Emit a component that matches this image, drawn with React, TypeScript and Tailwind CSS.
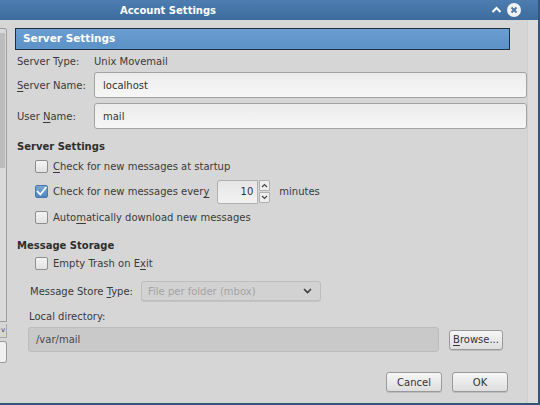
import React from 'react';

const U: React.FC<{ children: React.ReactNode }> = ({ children }) => <span className="underline underline-offset-2">{children}</span>;

const Check: React.FC<{ checked?: boolean }> = ({ checked }) =>
  checked ? (
    <div className="w-[13px] h-[13px] shrink-0 rounded-[2px] border border-[#4a78a8] bg-gradient-to-b from-[#7aa7d6] to-[#4f86c0] flex items-center justify-center">
      <svg width="11" height="11" viewBox="0 0 11 11">
        <path d="M1.5 5.5 L4.3 8.5 L9.8 1.8" fill="none" stroke="#fff" strokeWidth="1.8" strokeLinecap="round" strokeLinejoin="round" />
      </svg>
    </div>
  ) : (
    <div className="w-[13px] h-[13px] shrink-0 rounded-[2px] border border-[#8e8e8e] bg-gradient-to-b from-[#f4f4f4] to-[#e2e2e2]" />
  );

const Btn: React.FC<{ className?: string; children: React.ReactNode }> = ({ className, children }) => (
  <div className={`h-[20px] shrink-0 flex items-center justify-center rounded-[3px] border border-[#9a9a9a] bg-gradient-to-b from-[#f6f6f6] to-[#dedede] shadow-[0_1px_0_#bdbdbd] text-[#333] ${className ?? ''}`}>
    {children}
  </div>
);

export default function App() {
  return (
    <div
      className="w-[540px] h-[405px] overflow-hidden bg-[#d6d6d6] flex flex-col text-[10px] text-[#3a3a3a] border-r-2 border-b-2 border-[#34557a] whitespace-nowrap"
      style={{ fontFamily: '"DejaVu Sans", Verdana, sans-serif' }}
    >
      {/* title bar */}
      <div className="h-[20px] shrink-0 bg-gradient-to-b from-[#4d7db1] to-[#3d6b9d] flex items-center relative">
        <div className="w-[336px] text-center text-white font-bold text-[10px]">Account Settings</div>
        <svg className="absolute left-[491px] top-[6px]" width="11" height="8" viewBox="0 0 11 8">
          <path d="M1.5 6 L5.5 2 L9.5 6" fill="none" stroke="#fff" strokeWidth="2" />
        </svg>
        <div className="absolute left-[507px] top-[3px] w-[14px] h-[14px] rounded-full bg-[#f2f2f2] flex items-center justify-center">
          <svg width="8" height="8" viewBox="0 0 8 8">
            <path d="M1.5 1.5 L6.5 6.5 M6.5 1.5 L1.5 6.5" stroke="#4a76a6" strokeWidth="1.8" />
          </svg>
        </div>
      </div>

      <div className="flex flex-1 min-h-0">
        {/* left pane fragment */}
        <div className="w-[7px] shrink-0 flex flex-col pt-[8px]">
          <div className="h-[294px] border-r border-t border-b border-[#9d9d9d] rounded-tr-[3px] flex flex-col bg-[#dadada]">
            <div className="h-[135px] mt-[4px] mr-[1px] bg-[#bcbcbc]" />
          </div>
          <div className="h-[14px] mt-[2px] border-r border-b border-[#a8a8a8] text-[7px] leading-[12px] text-[#444] pl-[1px]">v</div>
          <div className="h-[22px] mt-[3px] border-r border-t border-b border-[#9a9a9a] rounded-r-[3px] bg-[#f0f0f0]" />
        </div>

        {/* main */}
        <div className="w-[520px] shrink-0 flex flex-col pl-[10px]">
          <div className="mt-[8px] ml-[-2px] mr-[17px] h-[22px] bg-gradient-to-b from-[#6a9dd0] to-[#5d92c7] border border-[#1f2f42] flex items-center pl-[7px] text-white font-bold text-[10.5px]">
            Server Settings
          </div>

          <div className="mt-[3px] h-[16px] flex items-center">
            <span className="w-[77px]">Server Type:</span>
            <span>Unix Movemail</span>
          </div>
          <div className="mt-[3px] h-[26px] flex items-center">
            <span className="w-[77px]"><U>S</U>erver Name:</span>
            <div className="flex-1 h-full rounded-[3px] border border-[#a3a3a3] bg-gradient-to-b from-[#ececec] to-[#f6f6f6] flex items-center pl-[8px] text-[#333]">localhost</div>
          </div>
          <div className="mt-[5px] h-[26px] flex items-center">
            <span className="w-[77px]">User <U>N</U>ame:</span>
            <div className="flex-1 h-full rounded-[3px] border border-[#a3a3a3] bg-gradient-to-b from-[#ececec] to-[#f6f6f6] flex items-center pl-[8px] text-[#333]">mail</div>
          </div>

          <div className="mt-[9px] h-[16px] flex items-center font-bold text-[#2e2e2e]">Server Settings</div>

          <div className="h-[25px] flex items-center gap-[5px] pl-[18px]">
            <Check />
            <span><U>C</U>heck for new messages at startup</span>
          </div>
          <div className="h-[25px] flex items-center pl-[18px]">
            <Check checked />
            <span className="ml-[5px]">Check for new messages ever<U>y</U></span>
            <div className="ml-[8px] w-[41px] h-[24px] rounded-l-[3px] border border-[#b0b0b0] bg-gradient-to-b from-[#e6e6e6] to-[#f2f2f2] flex items-center justify-end pr-[4px] text-[#333]">10</div>
            <div className="flex flex-col ml-[1px] gap-[1px]">
              <div className="w-[11px] h-[11px] border border-[#b0b0b0] rounded-tr-[2px] bg-[#eeeeee] flex items-center justify-center">
                <svg width="7" height="5" viewBox="0 0 7 5"><path d="M1 4 L3.5 1.5 L6 4" fill="none" stroke="#444" strokeWidth="1.2" /></svg>
              </div>
              <div className="w-[11px] h-[11px] border border-[#b0b0b0] rounded-br-[2px] bg-[#eeeeee] flex items-center justify-center">
                <svg width="7" height="5" viewBox="0 0 7 5"><path d="M1 1 L3.5 3.5 L6 1" fill="none" stroke="#444" strokeWidth="1.2" /></svg>
              </div>
            </div>
            <span className="ml-[9px]">minutes</span>
          </div>
          <div className="h-[26px] flex items-center gap-[5px] pl-[18px]">
            <Check />
            <span>Auto<U>m</U>atically download new messages</span>
          </div>

          <div className="mt-[7px] h-[16px] flex items-center font-bold text-[#2e2e2e]">Message Storage</div>
          <div className="h-[20px] flex items-center gap-[5px] pl-[18px]">
            <Check />
            <span>Empty Trash on E<U>x</U>it</span>
          </div>

          <div className="mt-[8px] h-[20px] flex items-center pl-[13px]">
            <span className="w-[111px]">Message Store <U>T</U>ype:</span>
            <div className="w-[180px] h-full rounded-[3px] border border-[#bdbdbd] bg-[#d2d2d2] flex items-center pl-[6px] pr-[8px] text-[#a3a3a3] shadow-[0_1px_0_#c4c4c4]">
              <span className="flex-1">File per folder (mbox)</span>
              <svg width="9" height="6" viewBox="0 0 9 6"><path d="M1 1 L4.5 4.5 L8 1" fill="none" stroke="#3c3c3c" strokeWidth="1.6" /></svg>
            </div>
          </div>

          <div className="mt-[7px] h-[16px] flex items-center pl-[12px]">Local directory:</div>
          <div className="mt-[3px] h-[25px] flex items-center pl-[11px]">
            <div className="w-[411px] h-full rounded-[3px] border border-[#bcbcbc] bg-[#c9c9c9] flex items-center pl-[7px] text-[#4a4a4a]">/var/mail</div>
            <Btn className="ml-[10px] w-[54px]"><span><U>B</U>rowse...</span></Btn>
          </div>

          <div className="mt-[20px] flex justify-end pr-[19px] gap-[10px]">
            <Btn className="w-[56px]">Cancel</Btn>
            <Btn className="w-[56px]">OK</Btn>
          </div>
        </div>

        {/* right edge strip */}
        <div className="flex-1 bg-[#dcdcdc] border-l border-[#cfcfcf]" />
      </div>
    </div>
  );
}
